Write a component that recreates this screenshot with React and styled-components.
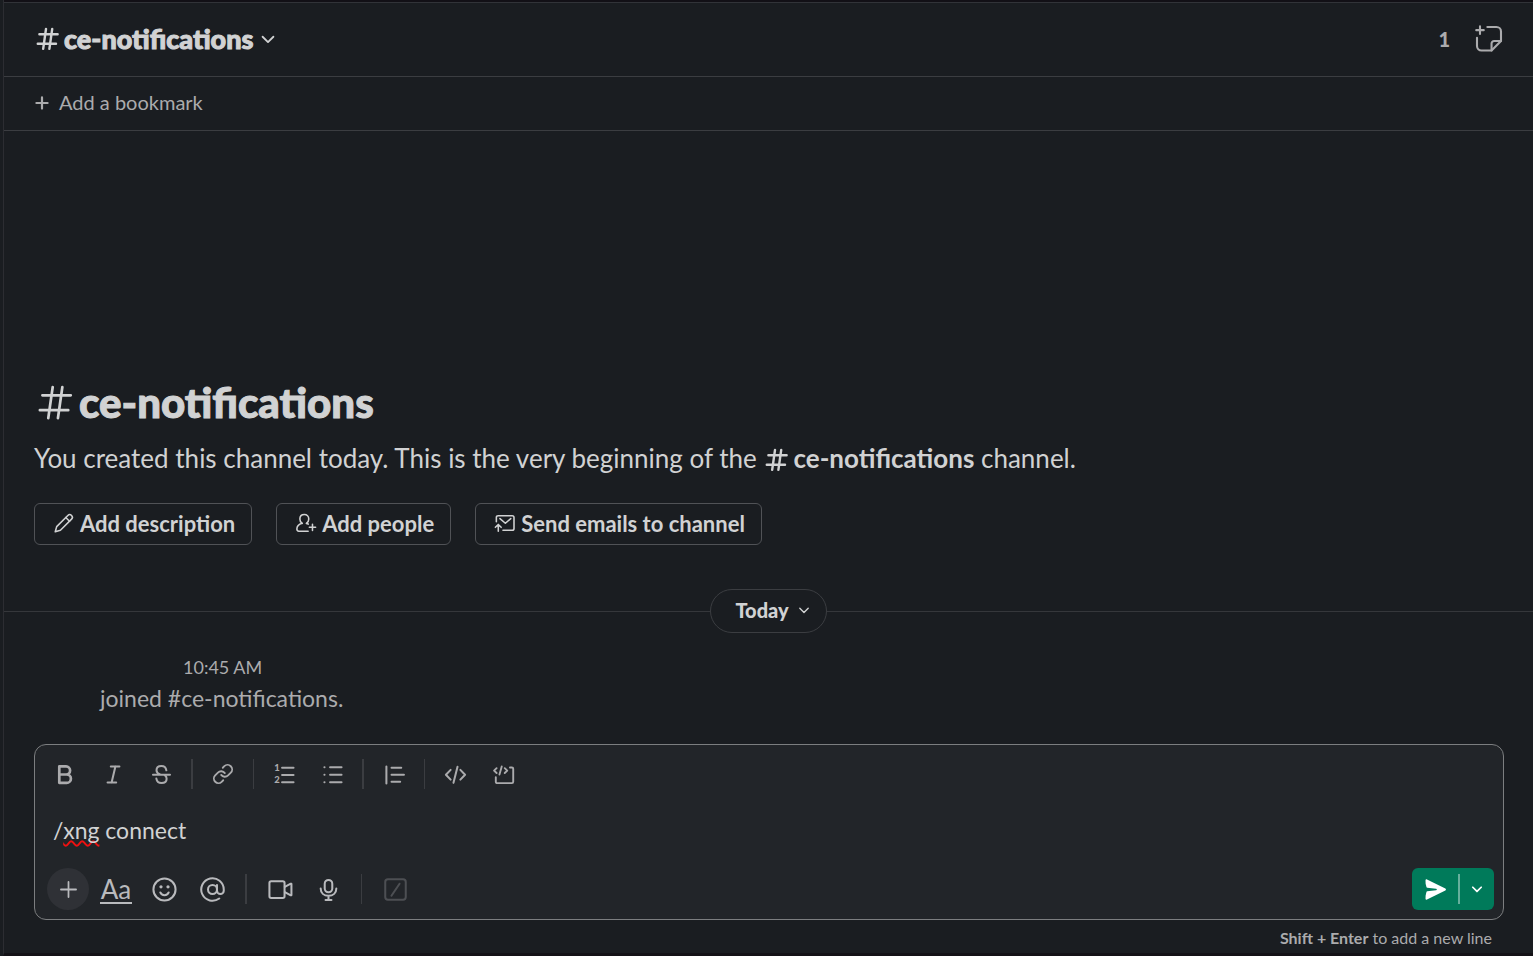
import React, { useState } from 'react';
import styled, { createGlobalStyle } from 'styled-components';
import { AtSign, Link } from 'lucide-react';

const CHANNEL = 'ce-notifications';

const Icon = ({ size = 27, weight = 1.5, children }) => (
  <svg
    width={size}
    height={size}
    viewBox="0 0 20 20"
    fill="none"
    stroke="currentColor"
    strokeWidth={weight}
    strokeLinecap="round"
    strokeLinejoin="round"
    aria-hidden="true"
  >
    {children}
  </svg>
);

const HashIcon = ({ size, weight }) => (
  <Icon size={size} weight={weight}>
    <path d="M4 6.8h13.5M2.8 13.9h13.5M8.9 2.9 6.8 17.7M13.5 2.9l-2.1 14.8" />
  </Icon>
);

const ChevronIcon = ({ size = 18, weight = 2 }) => (
  <Icon size={size} weight={weight}>
    <path d="m4 7.5 6 6 6-6" />
  </Icon>
);

const PlusIcon = ({ size, weight }) => (
  <Icon size={size} weight={weight}>
    <path d="M10 4.4v11.2M4.4 10h11.2" />
  </Icon>
);

const CanvasIcon = () => (
  <Icon size={30} weight={1.4}>
    <path d="M4 1.6v5M1.5 4.1h5" />
    <path d="M8.9 2H15a3 3 0 0 1 3 3v6.3l-6.3 6.4H5a3 3 0 0 1-3-3V9.2" />
    <path d="M18 11.3h-4.6a1.7 1.7 0 0 0-1.7 1.7v4.7" />
  </Icon>
);

const PencilIcon = () => (
  <Icon size={24} weight={1.3}>
    <path d="M2.7 17.3 3.9 13l9.3-9.3a2.2 2.2 0 0 1 3.1 0 2.2 2.2 0 0 1 0 3.1L7 16.1z" />
    <path d="m11.5 5.4 3.1 3.1" />
  </Icon>
);

const AddPersonIcon = () => (
  <Icon size={24} weight={1.3}>
    <path d="M6.8 10.3C5.4 9.5 4.9 8.2 4.9 6.6c0-2.2 1.5-3.7 3.7-3.7s3.7 1.5 3.7 3.7c0 1.6-.5 2.9-1.9 3.7" />
    <path d="M6.8 10.3c-2.8.8-4.4 2.4-4.4 4.8 0 1 .6 1.7 1.6 1.7h7.8" />
    <path d="M10.4 10.3c.6.1 1.1.3 1.5.6M15.4 11v5.2M12.8 13.6H18" />
  </Icon>
);

const EmailIcon = () => (
  <Icon size={24} weight={1.3}>
    <path d="M2.8 9V5.4c0-.9.6-1.5 1.5-1.5H16c.9 0 1.5.6 1.5 1.5v9.2c0 .9-.6 1.5-1.5 1.5H8.3" />
    <path d="m5.8 6.3 4.5 3.9 4.5-3.9M4.4 16.8v-5.4M2 13.6l2.4-2.4 2.4 2.4" />
  </Icon>
);

const BoldIcon = () => (
  <Icon weight={2}>
    <path d="M5.4 4h5a3 3 0 0 1 0 6h-5zM5.4 10h5.5a3.1 3.1 0 0 1 0 6.2H5.4z" />
  </Icon>
);

const ItalicIcon = () => (
  <Icon>
    <path d="M8 4h6.4M5.6 16H12M11.4 4 8.6 16" />
  </Icon>
);

const StrikeIcon = () => (
  <Icon>
    <path d="M3.7 10.2h12.6M13.6 6.9c-.3-2-1.7-3.2-3.7-3.2-2.1 0-3.6 1.2-3.6 3.1 0 1.6 1 2.5 2.7 3.1" />
    <path d="M6.2 13c.3 2 1.8 3.3 3.8 3.3 2.2 0 3.8-1.2 3.8-3.2 0-1.2-.5-2-1.4-2.6" />
  </Icon>
);

const OrderedListIcon = () => (
  <Icon>
    <path d="M8.2 5h8.5M8.2 10.4h8.5M8.2 15.8h8.5" />
    <Digit x="2.4" y="7.4">1</Digit>
    <Digit x="2.4" y="16.6">2</Digit>
  </Icon>
);

const BulletListIcon = () => (
  <Icon>
    <path d="M8.2 4.6h8.5M8.2 10.2h8.5M8.2 15.8h8.5" />
    <path d="M4 4.6h.1M4 10.2h.1M4 15.8h.1" />
  </Icon>
);

const QuoteIcon = () => (
  <Icon>
    <path d="M4 4v12.6M7.8 5h7.2M7.8 10.2h9.2M7.8 15.4h6.4" />
  </Icon>
);

const CodeIcon = () => (
  <Icon>
    <path d="M6.4 6.6 2.9 10.2l3.5 3.6M13.6 6.6l3.5 3.6-3.5 3.6M11.5 4.2 8.5 16.2" />
  </Icon>
);

const CodeBlockIcon = () => (
  <Icon weight={1.4}>
    <path d="M4.9 5.3 3 7.1l1.9 1.8M10.9 5.3l1.9 1.8-1.9 1.8M8.7 4 7 10" />
    <path d="M14.8 4.8h1.4c.6 0 1 .4 1 1v9.6c0 .6-.4 1-1 1H5.3c-.6 0-1-.4-1-1V12" />
  </Icon>
);

const SmileIcon = () => (
  <Icon>
    <circle cx="10" cy="10" r="8.2" />
    <path d="M6.9 12.2c.5 1.3 1.6 2 3.1 2s2.6-.7 3.1-2" />
    <circle cx="7.4" cy="8" r="1.2" fill="currentColor" stroke="none" />
    <circle cx="12.6" cy="8" r="1.2" fill="currentColor" stroke="none" />
  </Icon>
);

const VideoIcon = () => (
  <Icon>
    <rect x="1.8" y="3.9" width="11.2" height="12.4" rx="1.3" />
    <path d="m13.2 8.1 4.4-2.4c.3-.1.5 0 .5.3v8c0 .3-.2.4-.5.3l-4.4-2.4" />
  </Icon>
);

const MicIcon = () => (
  <Icon>
    <rect x="7.2" y="2.9" width="5.6" height="9.2" rx="2.8" />
    <path d="M4.2 9.3c0 3.2 2.4 5.4 5.8 5.4s5.8-2.2 5.8-5.4M10 14.7v3M7.8 17.7h4.4" />
  </Icon>
);

const SlashIcon = () => (
  <Icon>
    <rect x="2.4" y="2.4" width="15.2" height="15.2" rx="2" />
    <path d="M13 5.7 7 14.6" />
  </Icon>
);

const SendIcon = () => (
  <Icon>
    <path
      d="M2.6 3.1c.1-.6.5-.8 1.1-.5l13.6 6.7c.6.3.6 1 0 1.4L3.7 17.4c-.6.3-1 .1-1.1-.5-.1-1.7.1-3.4.7-5.1.1-.3.3-.5.6-.5L10.4 10.6c.8-.1.8-1.1 0-1.2L3.9 8.7c-.3 0-.5-.2-.6-.5-.6-1.7-.8-3.4-.7-5.1z"
      fill="currentColor"
      stroke="none"
    />
  </Icon>
);

const ChannelHeader = () => (
  <Header>
    <ChannelButton type="button">
      <HashIcon size={27} weight={1.8} />
      <ChannelName>{CHANNEL}</ChannelName>
      <ChevronIcon />
    </ChannelButton>
    <HeaderActions>
      <MemberCount type="button" aria-label="1 member">
        1
      </MemberCount>
      <HeaderIconButton type="button" aria-label="Add canvas">
        <CanvasIcon />
      </HeaderIconButton>
    </HeaderActions>
  </Header>
);

const BookmarkBar = () => (
  <Bookmarks>
    <BookmarkButton type="button">
      <PlusIcon size={20} weight={2.2} />
      <span>Add a bookmark</span>
    </BookmarkButton>
  </Bookmarks>
);

const ChannelIntro = () => (
  <Intro>
    <IntroTitle>
      <HashIcon size={42} weight={1.3} />
      <span>{CHANNEL}</span>
    </IntroTitle>
    <IntroText>
      You created this channel today. This is the very beginning of the{' '}
      <ChannelMention>
        <HashIcon size={27} weight={1.8} />
        {CHANNEL}
      </ChannelMention>{' '}
      channel.
    </IntroText>
    <IntroActions>
      <OutlineButton type="button">
        <PencilIcon />
        Add description
      </OutlineButton>
      <OutlineButton type="button">
        <AddPersonIcon />
        Add people
      </OutlineButton>
      <OutlineButton type="button">
        <EmailIcon />
        Send emails to channel
      </OutlineButton>
    </IntroActions>
  </Intro>
);

const JoinMessage = ({ time }) => (
  <Message>
    <MessageTime>{time}</MessageTime>
    <MessageText>joined #{CHANNEL}.</MessageText>
  </Message>
);

const Composer = () => {
  const [text, setText] = useState('/xng connect');
  const parts = text.split(/(xng)/);

  return (
    <ComposerBox>
      <FormatBar>
        <ToolButton type="button" aria-label="Bold"><BoldIcon /></ToolButton>
        <ToolButton type="button" aria-label="Italic"><ItalicIcon /></ToolButton>
        <ToolButton type="button" aria-label="Strikethrough"><StrikeIcon /></ToolButton>
        <Separator $thick $space={3} />
        <ToolButton type="button" aria-label="Link">
          <Link size={22} strokeWidth={2} />
        </ToolButton>
        <Separator $space={3} />
        <ToolButton type="button" aria-label="Ordered list"><OrderedListIcon /></ToolButton>
        <ToolButton type="button" aria-label="Bulleted list"><BulletListIcon /></ToolButton>
        <Separator $thick $space={3} />
        <ToolButton type="button" aria-label="Blockquote"><QuoteIcon /></ToolButton>
        <Separator $space={3} />
        <ToolButton type="button" aria-label="Code"><CodeIcon /></ToolButton>
        <ToolButton type="button" aria-label="Code block"><CodeBlockIcon /></ToolButton>
      </FormatBar>

      <Editor>
        <SpellingLayer aria-hidden="true">
          {parts.map((part, i) => (part === 'xng' ? <Misspelled key={i}>{part}</Misspelled> : part))}
        </SpellingLayer>
        <MessageInput
          rows={1}
          spellCheck={false}
          aria-label={`Message to ${CHANNEL}`}
          value={text}
          onChange={(e) => setText(e.target.value)}
        />
      </Editor>

      <ActionBar>
        <ActionGroup>
          <AttachButton type="button" aria-label="Attach">
            <PlusIcon size={27} weight={1.3} />
          </AttachButton>
          <ToolButton type="button" aria-label="Hide formatting">
            <FormatLabel>Aa</FormatLabel>
          </ToolButton>
          <ToolButton type="button" aria-label="Emoji"><SmileIcon /></ToolButton>
          <ToolButton type="button" aria-label="Mention someone">
            <AtSign size={27} strokeWidth={1.8} />
          </ToolButton>
          <Separator $thick $space={6} />
          <ToolButton type="button" aria-label="Record video"><VideoIcon /></ToolButton>
          <ToolButton type="button" aria-label="Record audio"><MicIcon /></ToolButton>
          <Separator $space={6} />
          <ToolButton type="button" aria-label="Shortcuts" disabled><SlashIcon /></ToolButton>
        </ActionGroup>
        <SendGroup>
          <SendButton type="button" aria-label="Send now">
            <SendIcon />
          </SendButton>
          <SendDivider />
          <ScheduleButton type="button" aria-label="Schedule for later">
            <ChevronIcon size={14} weight={2.5} />
          </ScheduleButton>
        </SendGroup>
      </ActionBar>
    </ComposerBox>
  );
};

const App = () => {
  return (
    <>
      <GlobalStyle />
      <Page>
        <ChannelHeader />
        <BookmarkBar />
        <Messages>
          <ChannelIntro />
          <DayDivider>
            <DayButton type="button">
              Today
              <ChevronIcon size={14} />
            </DayButton>
          </DayDivider>
          <JoinMessage time="10:45 AM" />
        </Messages>
        <Footer>
          <Composer />
          <Hint>
            <b>Shift + Enter</b> to add a new line
          </Hint>
        </Footer>
      </Page>
    </>
  );
};

export default App;

const GlobalStyle = createGlobalStyle`
  * {
    box-sizing: border-box;
  }

  body {
    margin: 0;
    background: #1a1d21;
    color: #d1d2d3;
    font-family: Lato, 'Liberation Sans', sans-serif;
  }

  button,
  textarea {
    margin: 0;
    padding: 0;
    border: 0;
    background: none;
    color: inherit;
    font: inherit;
  }

  button {
    cursor: pointer;
  }

  svg {
    flex-shrink: 0;
  }
`;

const Page = styled.main`
  display: flex;
  flex-direction: column;
  min-height: 100vh;
  margin-left: 3px;
  border-left: 1px solid #2c2d32;
  border-bottom: 3px solid #141217;
  box-shadow: inset 0 2px #121016;
  padding-top: 2px;
`;

const Header = styled.header`
  display: flex;
  align-items: center;
  justify-content: space-between;
  height: 75px;
  padding: 0 29px 2px 30px;
  border-top: 1px solid #313338;
  border-bottom: 1px solid #3b3d41;
`;

const ChannelButton = styled.button`
  display: flex;
  align-items: center;
  gap: 3px;
`;

const ChannelName = styled.h2`
  margin: 0;
  padding-right: 3px;
  font-size: 27px;
  font-weight: 900;
  line-height: 36px;
  -webkit-text-stroke: 1px currentColor;
`;

const HeaderActions = styled.div`
  display: flex;
  align-items: center;
  gap: 24px;
  color: #ababad;
`;

const MemberCount = styled.button`
  font-size: 20px;
  font-weight: 900;
`;

const HeaderIconButton = styled.button`
  display: flex;
`;

const Bookmarks = styled.div`
  display: flex;
  align-items: center;
  height: 54px;
  padding: 0 28px 2px;
  border-bottom: 1px solid #3b3d41;
`;

const BookmarkButton = styled.button`
  display: flex;
  align-items: center;
  gap: 7px;
  font-size: 20px;
  line-height: 27px;
  color: #ababad;
`;

const Messages = styled.section`
  display: flex;
  flex: 1;
  flex-direction: column;
  justify-content: flex-end;
`;

const Intro = styled.div`
  padding: 24px 30px 44px;
`;

const IntroTitle = styled.h1`
  display: flex;
  align-items: center;
  gap: 3px;
  margin: 0 0 7px;
  font-size: 42px;
  font-weight: 900;
  line-height: 60px;
  -webkit-text-stroke: 1px currentColor;
`;

const IntroText = styled.p`
  margin: 0 0 25px;
  font-size: 26px;
  line-height: 39px;
`;

const ChannelMention = styled.b`
  white-space: nowrap;

  & > svg {
    margin-right: 3px;
    vertical-align: -5px;
  }
`;

const IntroActions = styled.div`
  display: flex;
  flex-wrap: wrap;
  gap: 24px;
`;

const OutlineButton = styled.button`
  display: flex;
  align-items: center;
  gap: 4px;
  height: 42px;
  padding: 0 16px 2px 17px;
  border: 1px solid #505256;
  border-radius: 6px;
  font-size: 22px;
  font-weight: 700;
`;

const DayDivider = styled.div`
  display: flex;
  align-items: center;

  &::before,
  &::after {
    content: '';
    flex: 1;
    height: 1px;
    background: #35373b;
  }
`;

const DayButton = styled.button`
  display: flex;
  align-items: center;
  gap: 8px;
  height: 44px;
  padding: 0 15px 2px 24px;
  border: 1px solid #3b3d41;
  border-radius: 22px;
  font-size: 20px;
  font-weight: 900;
`;

const Message = styled.article`
  padding: 19px 30px 29px 96px;
  color: #ababad;
`;

const MessageTime = styled.time`
  display: block;
  padding-left: 83px;
  font-size: 18px;
  line-height: 30px;
`;

const MessageText = styled.p`
  margin: 0;
  font-size: 23px;
  line-height: 33px;
`;

const Footer = styled.footer`
  padding: 0 29px 3px 30px;
`;

const ComposerBox = styled.div`
  border: 1px solid #7c7e80;
  border-radius: 12px;
  background: #222529;
`;

const FormatBar = styled.div`
  display: flex;
  align-items: center;
  gap: 6px;
  padding: 8px 9px 1px;
  color: #ababad;
`;

const ToolButton = styled.button`
  display: flex;
  align-items: center;
  justify-content: center;
  width: 42px;
  height: 42px;
  border-radius: 6px;

  &:disabled {
    color: #4d4f53;
  }
`;

const Separator = styled.span`
  width: ${({ $thick }) => ($thick ? 2 : 1)}px;
  height: 30px;
  margin: 0 ${({ $space }) => $space}px;
  background: #3b3d41;
`;

const Digit = styled.text`
  fill: currentColor;
  stroke: none;
  font-size: 7px;
  font-weight: 900;
`;

const Editor = styled.div`
  display: grid;
  padding: 18px 18px 21px;
  font-size: 23px;
  line-height: 33px;
`;

const SpellingLayer = styled.div`
  grid-area: 1 / 1;
  color: transparent;
  white-space: pre-wrap;
`;

const Misspelled = styled.span`
  text-decoration: underline wavy #f01010 2px;
  text-underline-offset: 1px;
  text-decoration-skip-ink: none;
`;

const MessageInput = styled.textarea`
  grid-area: 1 / 1;
  width: 100%;
  height: 33px;
  outline: none;
  resize: none;
  overflow: hidden;
`;

const ActionBar = styled.div`
  display: flex;
  align-items: center;
  justify-content: space-between;
  padding: 0 9px 9px 12px;
`;

const ActionGroup = styled.div`
  display: flex;
  align-items: center;
  gap: 6px;
  color: #b9babd;
`;

const AttachButton = styled(ToolButton)`
  border-radius: 50%;
  background: #2f3136;
`;

const FormatLabel = styled.span`
  padding: 2px 1px 0;
  border-bottom: 2px solid currentColor;
  font-size: 26px;
  line-height: 26px;
`;

const SendGroup = styled.div`
  display: flex;
  align-items: center;
  border-radius: 6px;
  background: #007a5a;
  color: #fff;
`;

const SendButton = styled.button`
  display: flex;
  align-items: center;
  justify-content: center;
  width: 46px;
  height: 42px;
`;

const SendDivider = styled.span`
  width: 2px;
  height: 30px;
  background: #66af9c;
`;

const ScheduleButton = styled(SendButton)`
  width: 34px;
`;

const Hint = styled.p`
  margin: 6px 12px 0;
  font-size: 16px;
  line-height: 24px;
  text-align: right;
  color: #ababad;
`;
